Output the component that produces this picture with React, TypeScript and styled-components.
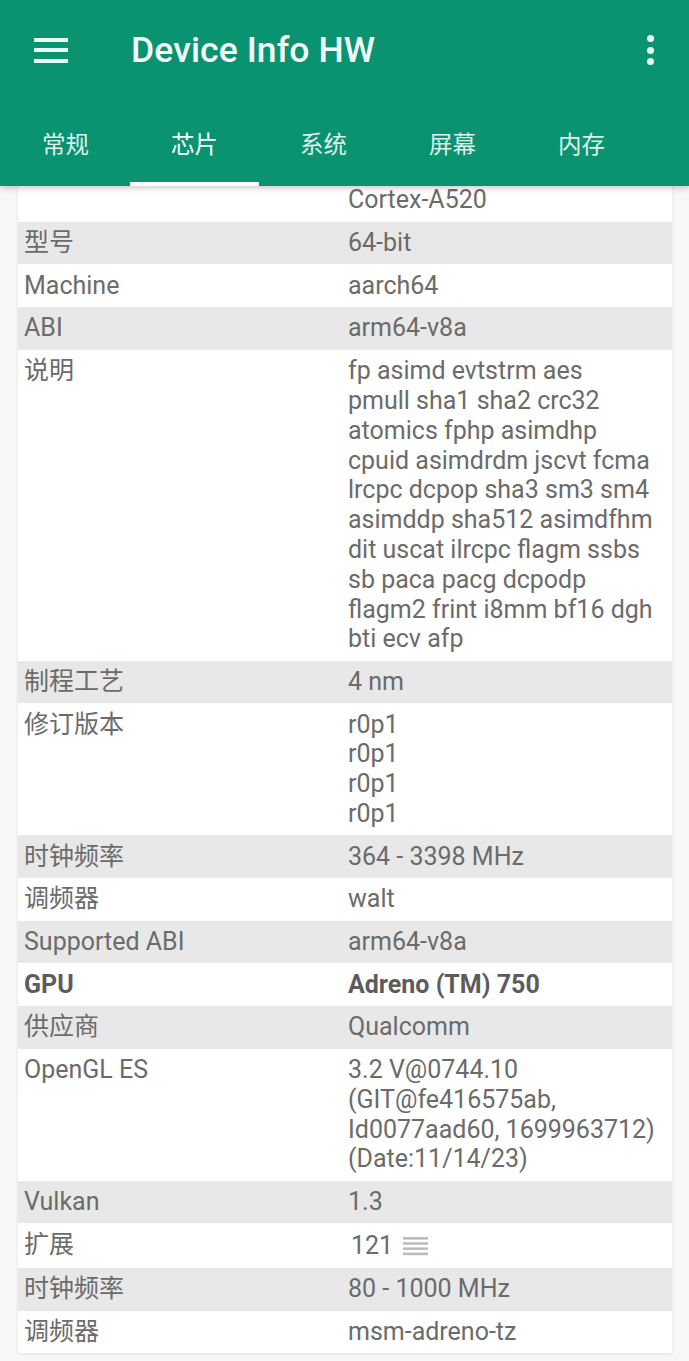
import styled, { createGlobalStyle } from 'styled-components'

const GlobalStyle = createGlobalStyle`
  html, body {
    margin: 0;
    padding: 0;
    background: #f7f7f7;
  }
  body {
    font-family: Roboto, 'Noto Sans CJK SC', sans-serif;
    width: 689px;
    height: 1361px;
    overflow: hidden;
  }
`

const Header = styled.header`
  position: relative;
  z-index: 2;
  height: 186px;
  background: #0a9371;
  box-shadow: 0 2px 6px rgba(0, 0, 0, 0.22);
  display: flex;
  flex-direction: column;
`

const Toolbar = styled.div`
  height: 100px;
  display: flex;
  align-items: center;
  padding: 0 35px 0 34px;
`

const MenuButton = styled.div`
  width: 34px;
  display: flex;
  flex-direction: column;
  gap: 6.5px;
  span {
    display: block;
    height: 4px;
    background: #eafaf4;
  }
`

const Title = styled.h1`
  flex: 1;
  margin: 0 0 0 63px;
  font-size: 35.5px;
  font-weight: 500;
  color: #f2fdf8;
  letter-spacing: 0.1px;
`

const MoreButton = styled.div`
  display: flex;
  flex-direction: column;
  gap: 4.3px;
  span {
    width: 7px;
    height: 7px;
    border-radius: 50%;
    background: #eafaf4;
  }
`

const Tabs = styled.nav`
  height: 86px;
  display: flex;
  padding-left: 1px;
`

const Tab = styled.div<{ $active?: boolean }>`
  width: 129px;
  box-sizing: border-box;
  display: flex;
  align-items: center;
  justify-content: center;
  padding-top: 4px;
  font-size: 23.5px;
  color: ${(p) => (p.$active ? '#ffffff' : 'rgba(255, 255, 255, 0.88)')};
  border-bottom: 4px solid ${(p) => (p.$active ? '#ffffff' : 'transparent')};
`

const Content = styled.main`
  margin: -7px 17px 0 18px;
  background: #ffffff;
  box-shadow: 0 1px 3px rgba(0, 0, 0, 0.1);
`

const Row = styled.div<{ $shaded?: boolean; $bold?: boolean }>`
  display: grid;
  grid-template-columns: 324px 1fr;
  padding: 6.45px 6px;
  background: ${(p) => (p.$shaded ? '#e8e8e8' : '#ffffff')};
  font-size: 25px;
  line-height: 29.8px;
  color: ${(p) => (p.$bold ? '#5c5c5c' : '#6b6b6b')};
  font-weight: ${(p) => (p.$bold ? 700 : 400)};
`

const Label = styled.div`
  white-space: nowrap;
`

const Value = styled.div`
  white-space: nowrap;
`

const ExtValue = styled.div`
  display: flex;
  align-items: center;
  gap: 10px;
  padding: 1px 0 1px 3px;
`

const ListIcon = () => (
  <svg width="25" height="22" viewBox="0 0 25 22">
    <g fill="#bcbcbc">
      <rect x="0" y="2" width="25" height="2.6" />
      <rect x="0" y="7.2" width="25" height="2.6" />
      <rect x="0" y="12.4" width="25" height="2.6" />
      <rect x="0" y="17.6" width="25" height="2.6" />
    </g>
  </svg>
)

interface IInfoRow {
  label: string
  lines: string[]
  bold?: boolean
  ext?: boolean
}

const rows: IInfoRow[] = [
  { label: '', lines: ['Cortex-A520'] },
  { label: '型号', lines: ['64-bit'] },
  { label: 'Machine', lines: ['aarch64'] },
  { label: 'ABI', lines: ['arm64-v8a'] },
  {
    label: '说明',
    lines: [
      'fp asimd evtstrm aes',
      'pmull sha1 sha2 crc32',
      'atomics fphp asimdhp',
      'cpuid asimdrdm jscvt fcma',
      'lrcpc dcpop sha3 sm3 sm4',
      'asimddp sha512 asimdfhm',
      'dit uscat ilrcpc flagm ssbs',
      'sb paca pacg dcpodp',
      'flagm2 frint i8mm bf16 dgh',
      'bti ecv afp',
    ],
  },
  { label: '制程工艺', lines: ['4 nm'] },
  { label: '修订版本', lines: ['r0p1', 'r0p1', 'r0p1', 'r0p1'] },
  { label: '时钟频率', lines: ['364 - 3398 MHz'] },
  { label: '调频器', lines: ['walt'] },
  { label: 'Supported ABI', lines: ['arm64-v8a'] },
  { label: 'GPU', lines: ['Adreno (TM) 750'], bold: true },
  { label: '供应商', lines: ['Qualcomm'] },
  {
    label: 'OpenGL ES',
    lines: [
      '3.2 V@0744.10',
      '(GIT@fe416575ab,',
      'Id0077aad60, 1699963712)',
      '(Date:11/14/23)',
    ],
  },
  { label: 'Vulkan', lines: ['1.3'] },
  { label: '扩展', lines: ['121'], ext: true },
  { label: '时钟频率', lines: ['80 - 1000 MHz'] },
  { label: '调频器', lines: ['msm-adreno-tz'] },
]

const tabs = ['常规', '芯片', '系统', '屏幕', '内存']

const App = () => {
  return (
    <>
      <GlobalStyle />
      <Header>
        <Toolbar>
          <MenuButton>
            <span />
            <span />
            <span />
          </MenuButton>
          <Title>Device Info HW</Title>
          <MoreButton>
            <span />
            <span />
            <span />
          </MoreButton>
        </Toolbar>
        <Tabs>
          {tabs.map((t, i) => (
            <Tab key={t} $active={i === 1}>
              {t}
            </Tab>
          ))}
        </Tabs>
      </Header>
      <Content>
        {rows.map((row, i) => (
          <Row key={i} $shaded={i % 2 === 1} $bold={row.bold}>
            <Label>{row.label}</Label>
            {row.ext ? (
              <ExtValue>
                {row.lines[0]}
                <ListIcon />
              </ExtValue>
            ) : (
              <div>
                {row.lines.map((l, j) => (
                  <Value key={j}>{l}</Value>
                ))}
              </div>
            )}
          </Row>
        ))}
      </Content>
    </>
  )
}

export default App
